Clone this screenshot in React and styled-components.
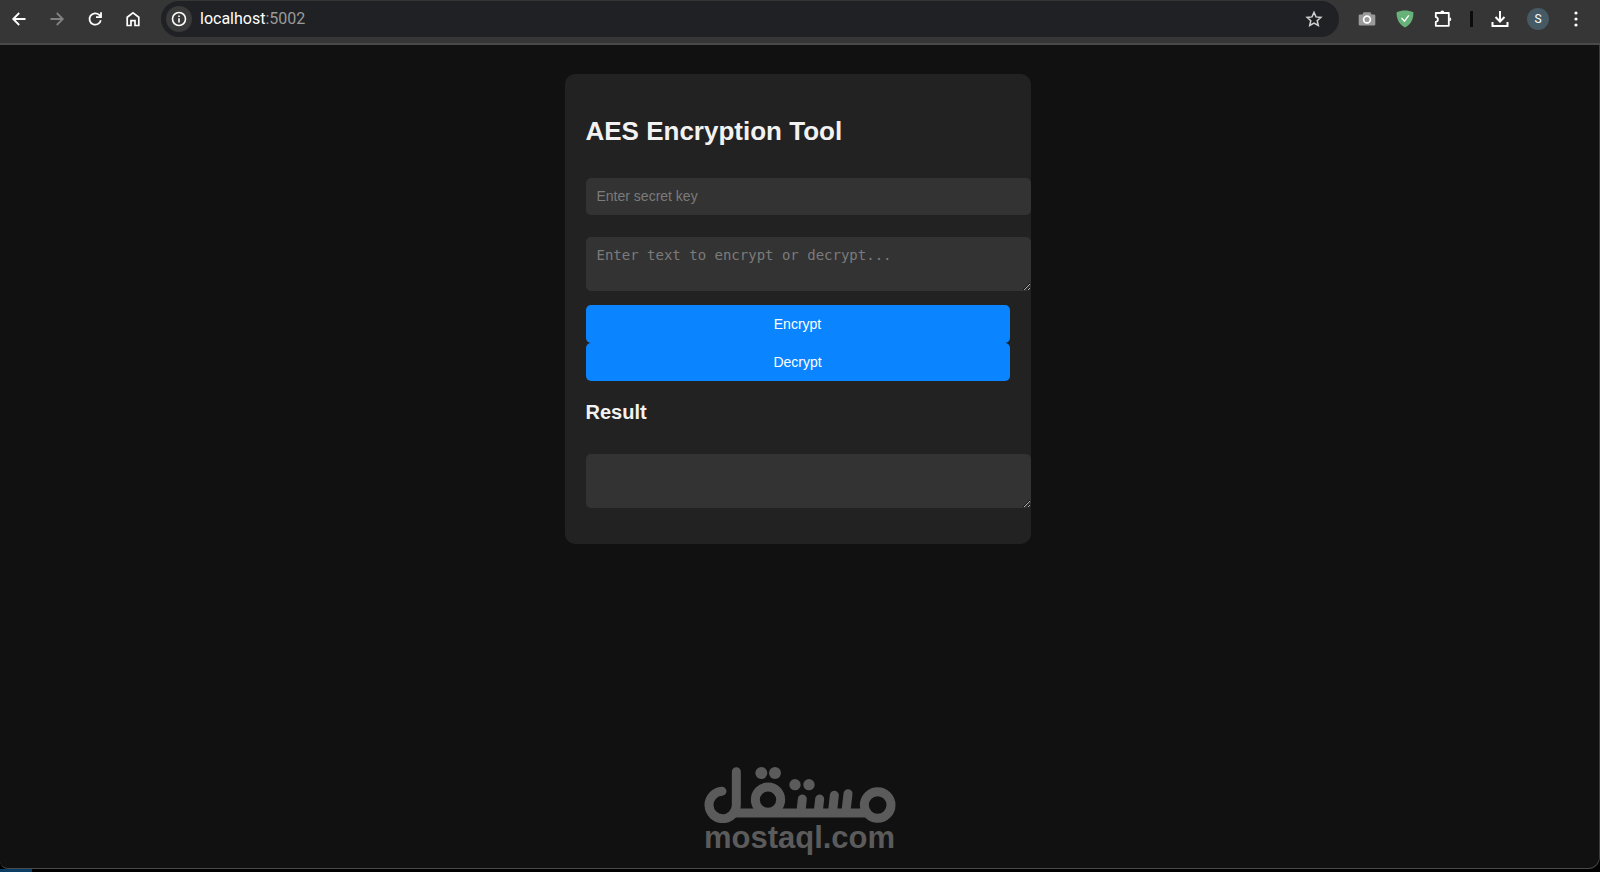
import React, { useState } from "react";
import styled, { createGlobalStyle } from "styled-components";

const App = () => {
    const [secret, setSecret] = useState("");
    const [text, setText] = useState("");

    return (
        <Screen>
            <GlobalStyle />
            <Toolbar>
                <NavButtons>
                    <IconButton aria-label="Back">
                        <svg width="16" height="16" viewBox="0 0 16 16" fill="none" stroke="#fff" strokeWidth="1.8">
                            <path d="M14.5 8H2.5M8.2 2L2.2 8l6 6" />
                        </svg>
                    </IconButton>
                    <IconButton aria-label="Forward" disabled>
                        <svg width="16" height="16" viewBox="0 0 16 16" fill="none" stroke="#818181" strokeWidth="1.8">
                            <path d="M1.5 8H13.5M7.8 2l6 6l-6 6" />
                        </svg>
                    </IconButton>
                    <IconButton aria-label="Reload">
                        <svg width="16" height="16" viewBox="0 0 16 16" fill="none" stroke="#fff" strokeWidth="1.8">
                            <path d="M13.8 9.2A5.7 5.7 0 1 1 12.2 3.9L14 5.8" />
                            <path d="M14 1.2V6.1H9" />
                        </svg>
                    </IconButton>
                    <IconButton aria-label="Home">
                        <svg width="16" height="16" viewBox="0 0 16 16" fill="none" stroke="#fff" strokeWidth="1.7">
                            <path d="M2.2 6.2L8 1.8l5.8 4.4v8.3H10V9.6H6v4.9H2.2z" />
                        </svg>
                    </IconButton>
                </NavButtons>
                <AddressBar>
                    <SiteInfo aria-label="View site information">
                        <svg width="16" height="16" viewBox="0 0 16 16" fill="none" stroke="#fff" strokeWidth="1.6">
                            <circle cx="8" cy="8" r="6.5" />
                            <path d="M8 7.2V11.4M8 4.4V6" />
                        </svg>
                    </SiteInfo>
                    <Url>
                        localhost<Port>:5002</Port>
                    </Url>
                    <IconButton aria-label="Bookmark this tab">
                        <svg width="18" height="18" viewBox="0 0 18 18" fill="none" stroke="#d0d0d0" strokeWidth="1.5">
                            <path d="M9 2.4l2 4.5 4.9.5-3.7 3.3 1.1 4.8L9 13l-4.3 2.5 1.1-4.8L2.1 7.4 7 6.9z" />
                        </svg>
                    </IconButton>
                </AddressBar>
                <Extensions>
                    <IconButton aria-label="Screenshot extension">
                        <svg width="18" height="16" viewBox="0 0 18 16">
                            <path d="M2 3.500h2.500l1-2.300h7l1 2.300h2.500a1.300 1.300 0 0 1 1.300 1.300v8.500a1.300 1.300 0 0 1-1.300 1.300H2a1.300 1.300 0 0 1-1.300-1.300v-8.500a1.300 1.300 0 0 1 1.300-1.300z" fill="#9a9a9a" />
                            <circle cx="9" cy="8.500" r="3.400" fill="#9a9a9a" stroke="#fff" strokeWidth="1.700" />
                        </svg>
                    </IconButton>
                    <IconButton aria-label="Ad blocker">
                        <svg width="18" height="18" viewBox="0 0 18 18">
                            <path d="M9 .6c2.800 0 5.600.6 8.400 1.600 0 6-1.200 11-8.400 15.300C1.800 13.200.6 8.200.6 2.200 3.400 1.200 6.200.6 9 .6z" fill="#67b279" />
                            <path d="M5.500 8l3 3.200 4.300-5.800" fill="none" stroke="#fff" strokeWidth="1.300" />
                        </svg>
                    </IconButton>
                    <IconButton aria-label="Extensions">
                        <svg width="20" height="20" viewBox="0 0 20 20" fill="none" stroke="#fff" strokeWidth="1.800">
                            <path d="M2.800 4h13v12.800h-13v-4c2.800-.4 2.800-4.200 0-4.600z" strokeLinejoin="round" />
                            <path d="M7.300 3.500a2 2 0 0 1 4 0zM16.300 8.300a2 2 0 0 1 0 4z" fill="#fff" stroke="none" />
                        </svg>
                    </IconButton>
                    <Divider />
                    <IconButton aria-label="Downloads">
                        <svg width="18" height="18" viewBox="0 0 18 18" fill="none" stroke="#fff" strokeWidth="2">
                            <path d="M9 1v10M4.500 7L9 11.500 13.500 7M1.500 12v4h15v-4" />
                        </svg>
                    </IconButton>
                    <Avatar aria-label="Profile">S</Avatar>
                    <IconButton aria-label="Menu">
                        <svg width="16" height="16" viewBox="0 0 16 16" fill="#fff">
                            <circle cx="8" cy="2" r="1.600" />
                            <circle cx="8" cy="8" r="1.600" />
                            <circle cx="8" cy="14" r="1.600" />
                        </svg>
                    </IconButton>
                </Extensions>
            </Toolbar>

            <Page>
                <Card>
                    <Title>AES Encryption Tool</Title>
                    <KeyInput
                        type="text"
                        aria-label="Secret key"
                        placeholder="Enter secret key"
                        value={secret}
                        onChange={(e) => setSecret(e.target.value)}
                    />
                    <TextBox
                        aria-label="Text"
                        placeholder="Enter text to encrypt or decrypt..."
                        value={text}
                        onChange={(e) => setText(e.target.value)}
                    />
                    <Actions>
                        <ActionButton>Encrypt</ActionButton>
                        <ActionButton>Decrypt</ActionButton>
                    </Actions>
                    <ResultTitle id="result">Result</ResultTitle>
                    <TextBox aria-labelledby="result" readOnly />
                </Card>

                <Watermark>
                    <svg width="192" height="56" viewBox="42 36 576 168" fill="none" stroke="#5b5b5b" strokeWidth="27" strokeLinecap="round">
                        <path d="M96 109A41 41 0 1 0 139 150V50" />
                        <path d="M138 174H524" />
                        <circle cx="234" cy="134" r="38" />
                        <circle cx="563" cy="150" r="40" />
                        <path d="M337 132L333 168M389 132L385 168M433 121L428 168M474 116L468 168" />
                        <g fill="#5b5b5b" stroke="none">
                            <circle cx="214" cy="54" r="18" />
                            <circle cx="255" cy="54" r="18" />
                            <circle cx="315" cy="89" r="17" />
                            <circle cx="357" cy="89" r="17" />
                        </g>
                    </svg>
                    <SiteName>mostaql.com</SiteName>
                </Watermark>
            </Page>
            <Dock />
        </Screen>
    );
};

// style

const GlobalStyle = createGlobalStyle`
    body {
        margin: 0;
        background: #000;
        font-family: "Liberation Sans", Arial, sans-serif;
    }
`;

const Screen = styled.div`
    display: flex;
    flex-direction: column;
    min-height: 100vh;
`;

const Toolbar = styled.header`
    display: flex;
    align-items: center;
    height: 36px;
    padding: 1px 12px 6px 7px;
    background: #363636;
    border-bottom: 2px solid #4a4a4c;
`;

const NavButtons = styled.nav`
    display: flex;
    gap: 14px;
    margin-right: 16px;
`;

const IconButton = styled.button`
    display: flex;
    align-items: center;
    justify-content: center;
    width: 24px;
    height: 24px;
    padding: 0;
    border: none;
    background: none;
    cursor: pointer;
`;

const AddressBar = styled.div`
    display: flex;
    align-items: center;
    flex: 1;
    height: 36px;
    padding: 0 13px 0 5px;
    border-radius: 18px;
    background: #202124;
`;

const SiteInfo = styled(IconButton)`
    width: 26px;
    height: 26px;
    border-radius: 50%;
    background: #3a3a3b;
`;

const Url = styled.span`
    flex: 1;
    margin-left: 8px;
    font-family: Roboto, sans-serif;
    font-size: 16px;
    line-height: 20px;
    color: #fff;
`;

const Port = styled.span`
    color: #9a9a9a;
`;

const Extensions = styled.div`
    display: flex;
    align-items: center;
    gap: 14px;
    margin-left: 16px;
`;

const Divider = styled.div`
    width: 3px;
    height: 16px;
    margin: 0 1px;
    background: #0c0c0c;
`;

const Avatar = styled.button`
    width: 22px;
    height: 22px;
    margin: 0 1px;
    padding: 0;
    border: none;
    border-radius: 50%;
    background: #455a64;
    color: #fff;
    font-family: Roboto, sans-serif;
    font-size: 12px;
`;

const Page = styled.main`
    display: flex;
    flex: 1;
    flex-direction: column;
    align-items: center;
    padding: 29px 4px 16px 0;
    background: #111;
    border-right: 1px solid #3c3c3c;
    border-bottom: 1px solid #4a4a4a;
    border-radius: 0 0 12px 8px;
`;

const Card = styled.section`
    display: flex;
    flex-direction: column;
    box-sizing: border-box;
    width: 100%;
    max-width: 466px;
    padding: 21px 21px 36px;
    border-radius: 10px;
    background: #222;
`;

const Title = styled.h1`
    margin: 21px 0 32px;
    font-size: 26px;
    line-height: 30px;
    color: #f2f2f2;
`;

/* fields run through the card's right padding, up to its edge */
const Field = styled.input`
    box-sizing: border-box;
    margin-right: -21px;
    padding: 10px 11px 12px;
    border: none;
    border-radius: 5px;
    background: #333;
    color: #fff;
    font-size: 14px;

    &::placeholder {
        color: #7b7b7b;
    }
`;

const KeyInput = styled(Field)`
    height: 37px;
    font-family: "Liberation Sans", Arial, sans-serif;
`;

const TextBox = styled(Field).attrs({ as: "textarea" })`
    height: 54px;
    margin-top: 22px;
    font-family: "DejaVu Sans Mono", monospace;
    line-height: 16px;
    resize: both;
`;

const Actions = styled.div`
    display: flex;
    flex-direction: column;
    margin-top: 14px;
`;

const ActionButton = styled.button`
    height: 38px;
    border: none;
    border-radius: 5px;
    background: #0a84ff;
    color: #fff;
    font-family: "Liberation Sans", Arial, sans-serif;
    font-size: 14px;
    cursor: pointer;
`;

const ResultTitle = styled.h2`
    margin: 20px 0 9px;
    font-size: 20px;
    line-height: 22px;
    color: #f2f2f2;
`;

const Watermark = styled.footer`
    display: flex;
    flex-direction: column;
    align-items: center;
    margin-top: auto;
    margin-left: 4px;
`;

const SiteName = styled.span`
    font-size: 31px;
    font-weight: bold;
    line-height: 29px;
    color: #5b5b5b;
`;

const Dock = styled.div`
    width: 32px;
    height: 3px;
    background: #0b3c66;
`;

export default App;
